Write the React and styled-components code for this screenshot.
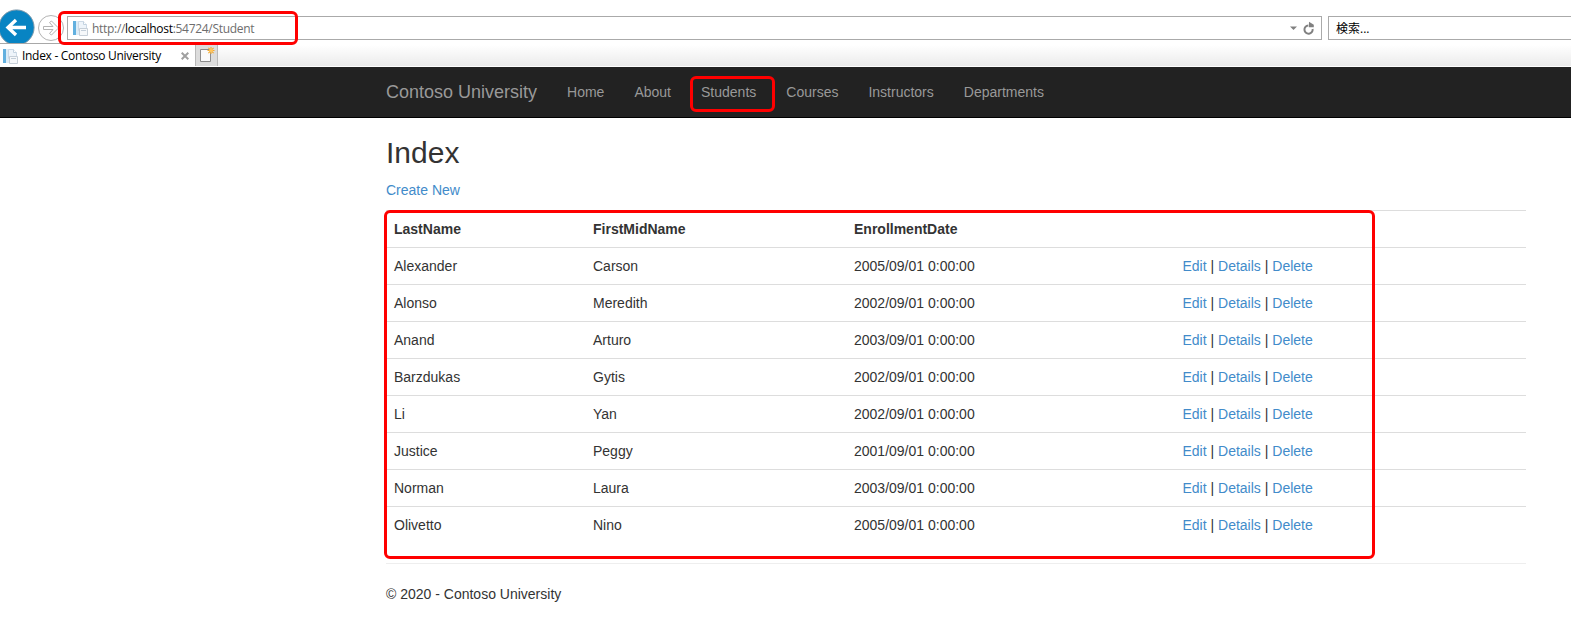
import React from "react";
import styled, { createGlobalStyle } from "styled-components";

const Global = createGlobalStyle`
  *, *::before, *::after { box-sizing: border-box; }
  html { overflow: hidden; }
  body {
    margin: 0;
    background: #fff;
    color: #333;
    font-family: "Liberation Sans", Arial, sans-serif;
    font-size: 14px;
    line-height: 20px;
    overflow: hidden;
  }
`;

const Highlight = styled.div`
  position: absolute;
  top: ${(p) => p.$top}px;
  left: ${(p) => p.$left}px;
  width: ${(p) => p.$width}px;
  height: ${(p) => p.$height}px;
  border: 3px solid #f00;
  border-radius: 6px;
  pointer-events: none;
  z-index: 2;
`;

const Chrome = styled.header`
  height: 67px;
  font-family: "Open Sans", "Noto Sans CJK JP", sans-serif;
  font-size: 12px;
`;

const AddressRow = styled.div`
  position: relative;
  display: flex;
  align-items: flex-start;
  height: 43px;
`;

const BackIcon = styled.svg`
  flex: none;
  width: 35px;
  height: 34px;
  margin-top: 9px;
`;

const ForwardIcon = styled.svg`
  flex: none;
  width: 28px;
  height: 28px;
  margin: 14px 2px 0;
`;

const Field = styled.div`
  display: flex;
  align-items: center;
  flex: ${(p) => (p.$width ? "none" : "1")};
  width: ${(p) => (p.$width ? `${p.$width}px` : "auto")};
  height: 24px;
  margin-top: 16px;
  margin-right: ${(p) => (p.$width ? 0 : 6)}px;
  padding: ${(p) => (p.$width ? "2px 6px 0 7px" : "0 3px 0 4px")};
  border: 1px solid #aaa;
  border-right-width: ${(p) => (p.$width ? 0 : 1)}px;
  background: #fff;
  color: #000;
`;

const Url = styled.span`
  flex: 1;
  margin-left: 4px;
  padding-top: 2px;
  color: #6d6d6d;
  letter-spacing: ${(p) => p.$spacing}px;
  white-space: nowrap;
  b { color: #000; font-weight: 400; }
`;

const TabStrip = styled.div`
  display: flex;
  height: 24px;
  border-bottom: 1px solid #fff;
  background: linear-gradient(#fff, #fff 2px, #ebebeb);
`;

const Tab = styled.div`
  display: flex;
  align-items: center;
  width: 195px;
  padding: 1px 6px 0 2px;
  border-top: 1px solid #a8a8a8;
  background: #fff;
  color: #000;
`;

const TabTitle = styled.span`
  flex: 1;
  margin-left: 4px;
  letter-spacing: ${(p) => p.$spacing}px;
  white-space: nowrap;
`;

const NewTab = styled.div`
  width: 23px;
  margin-top: 1px;
  border: solid #b9b9b9;
  border-width: 0 1px;
  background: #dcdcdc;
  svg { display: block; }
`;

const NavBar = styled.nav`
  height: 51px;
  border-bottom: 1px solid #000;
  background: #222;
`;

const Container = styled.div`
  width: 1140px;
  margin-left: 386px;
`;

const NavItems = styled(Container)`
  position: relative;
  display: flex;
  gap: 30px;
  line-height: 20px;
  padding-top: 15px;
`;

const NavLink = styled.a`
  color: #999;
  font-size: ${(p) => (p.$brand ? 18 : 14)}px;
`;

const Title = styled.h2`
  margin: 18px 0 11px;
  font-size: 30px;
  line-height: 33px;
  font-weight: 400;
`;

const Paragraph = styled.p`
  margin: 0 0 10px;
`;

const Link = styled.a`
  color: #428bca;
`;

const TableArea = styled.div`
  position: relative;
  margin-bottom: 20px;
`;

const Table = styled.table`
  width: 100%;
  border-collapse: separate;
  border-spacing: 0;
  table-layout: fixed;
  th, td {
    height: 37px;
    padding: 8px;
    border-top: 1px solid #ddd;
    line-height: 20px;
    text-align: left;
  }
`;

const Column = styled.col`
  width: ${(p) => p.$width}px;
`;

const Rule = styled.hr`
  height: 1px;
  margin: 0 0 20px;
  border: 0;
  background: #eee;
`;

const PageIcon = () => (
  <svg width="16" height="16" viewBox="0 0 16 16">
    <path d="M1 1H4V15H1Z" fill="#62b0df" />
    <path d="M4 1H7V15H4Z" fill="#dcecf7" />
    <path d="M6.5 1.5H11.5L14.5 4.5V10.5H6.5Z" fill="#eef4fa" stroke="#ccd9e6" />
    <path d="M11.5 1.5V4.5H14.5" fill="#fff" stroke="#c3d2e0" />
    <path d="M7.5 8.5H15.5V15.5H7.5Z" fill="#f6f8fa" stroke="#c6cfd8" />
    <path d="M9 10.5H14" stroke="#c3ced9" />
  </svg>
);

const students = [
  ["Alexander", "Carson", "2005/09/01 0:00:00"],
  ["Alonso", "Meredith", "2002/09/01 0:00:00"],
  ["Anand", "Arturo", "2003/09/01 0:00:00"],
  ["Barzdukas", "Gytis", "2002/09/01 0:00:00"],
  ["Li", "Yan", "2002/09/01 0:00:00"],
  ["Justice", "Peggy", "2001/09/01 0:00:00"],
  ["Norman", "Laura", "2003/09/01 0:00:00"],
  ["Olivetto", "Nino", "2005/09/01 0:00:00"],
];

const navLinks = ["Home", "About", "Students", "Courses", "Instructors", "Departments"];

function BrowserChrome() {
  return (
    <Chrome>
      <AddressRow>
        <BackIcon viewBox="0 0 35 34">
          <circle cx="16.5" cy="18.5" r="17.6" fill="#0884c3" stroke="#7f9aab" strokeWidth="1" />
          <path d="M26 18.5H8M16 11L8 18.5L16 26" fill="none" stroke="#fff" strokeWidth="3.4" />
        </BackIcon>
        <ForwardIcon viewBox="0 0 28 28">
          <circle cx="14" cy="14" r="12.5" fill="#fff" stroke="#b3b3b3" />
          <path d="M6.5 12.5H16L12.5 8.5L14.5 7L21.5 14L14.5 21L12.5 19.5L16 15.5H6.5Z" fill="#fff" stroke="#b3b3b3" />
        </ForwardIcon>
        <Field>
          <PageIcon />
          <Url $spacing={-0.3}>http://<b>localhost</b>:54724/Student</Url>
          <svg width="28" height="14" viewBox="0 0 28 14">
            <path d="M0 5.5H7L3.5 9Z" fill="#808080" />
            <path d="M18.9 3.9A4.1 4.1 0 1 0 23.2 7.4" transform="translate(-0.6 0.6)" fill="none" stroke="#808080" strokeWidth="2" />
            <path d="M19 0.8L23.8 3.8V0.8V6.2H18.8Z" fill="#808080" />
          </svg>
        </Field>
        <Field $width={243}>検索...</Field>
        <Highlight $left={57.5} $top={11} $width={240.5} $height={34} />
      </AddressRow>
      <TabStrip>
        <Tab>
          <PageIcon />
          <TabTitle $spacing={-0.3}>Index - Contoso University</TabTitle>
          <svg width="8" height="8" viewBox="0 0 8 8">
            <path d="M0.7 0.7L7.3 7.3M7.3 0.7L0.7 7.3" stroke="#a0a0a0" strokeWidth="2" />
          </svg>
        </Tab>
        <NewTab>
          <svg width="21" height="22" viewBox="0 0 21 22">
            <path d="M4.5 5.5H14.5V17.5H4.5Z" fill="#fafafa" stroke="#8c8c8c" />
            <path d="M15 3V10M11.5 6.5H18.5M12.4 3.9L17.6 9.1M17.6 3.9L12.4 9.1" stroke="#f0a830" strokeWidth="1.1" />
            <circle cx="15" cy="6.5" r="1.9" fill="#ffc55c" />
          </svg>
        </NewTab>
      </TabStrip>
    </Chrome>
  );
}

export default function App() {
  return (
    <>
      <Global />
      <BrowserChrome />
      <NavBar>
        <NavItems>
          <NavLink $brand>Contoso University</NavLink>
          {navLinks.map((label) => (
            <NavLink key={label}>{label}</NavLink>
          ))}
          <Highlight $left={304} $top={9} $width={85} $height={36} />
        </NavItems>
      </NavBar>
      <Container as="main">
        <Title>Index</Title>
        <Paragraph><Link>Create New</Link></Paragraph>
        <TableArea>
          <Table>
            <colgroup>
              <Column $width={199} />
              <Column $width={261} />
              <Column $width={328.5} />
              <Column $width={351.5} />
            </colgroup>
            <thead>
              <tr>
                <th>LastName</th>
                <th>FirstMidName</th>
                <th>EnrollmentDate</th>
                <th />
              </tr>
            </thead>
            <tbody>
              {students.map(([last, first, date]) => (
                <tr key={last}>
                  <td>{last}</td>
                  <td>{first}</td>
                  <td>{date}</td>
                  <td>
                    <Link>Edit</Link> | <Link>Details</Link> | <Link>Delete</Link>
                  </td>
                </tr>
              ))}
            </tbody>
          </Table>
          <Highlight $left={-2} $top={0} $width={991} $height={349} />
        </TableArea>
        <Rule />
        <Paragraph>© 2020 - Contoso University</Paragraph>
      </Container>
    </>
  );
}
